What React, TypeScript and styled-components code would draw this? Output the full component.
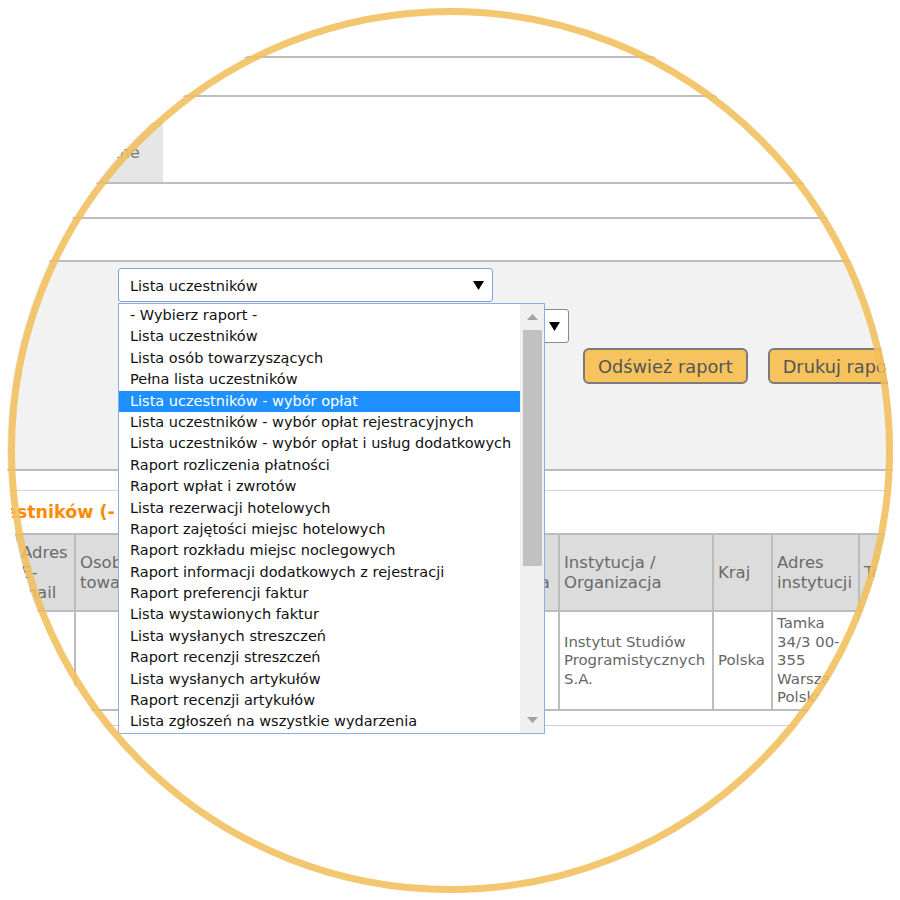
import React from "react";
import styled, { createGlobalStyle } from "styled-components";

const FONT = `"DejaVu Sans", Verdana, sans-serif`;

const Global = createGlobalStyle`
  html, body { margin: 0; padding: 0; background: #fff; }
  body { width: 900px; height: 900px; overflow: hidden; font-family: ${FONT}; }
`;

const Stage = styled.div`
  position: relative;
  width: 900px;
  height: 900px;
  background: #fff;
  overflow: hidden;
`;

const Page = styled.div`
  width: 900px;
  height: 900px;
  background: #fff;
  clip-path: circle(443px at 450px 450px);
  display: flex;
  flex-direction: column;
`;

const Ring = styled.div`
  position: absolute;
  left: 7.5px;
  top: 7.5px;
  width: 885px;
  height: 885px;
  box-sizing: border-box;
  border: 7px solid rgba(241, 190, 92, 0.88);
  border-radius: 50%;
  pointer-events: none;
`;

const Band = styled.div<{ $h: number; $line?: string; $lw?: number }>`
  flex: none;
  box-sizing: border-box;
  height: ${(p) => p.$h}px;
  border-bottom: ${(p) => p.$lw ?? 2}px solid ${(p) => p.$line ?? "#bdbdbd"};
`;

const TabBar = styled(Band)`
  display: flex;
  align-items: flex-end;
`;

const Tab = styled.div`
  width: 163px;
  height: 60px;
  box-sizing: border-box;
  padding-right: 23px;
  background: #e6e6e6;
  color: #777;
  font-size: 16.5px;
  display: flex;
  align-items: center;
  justify-content: flex-end;
  white-space: nowrap;
`;

const Panel = styled.div`
  flex: none;
  box-sizing: border-box;
  height: 209px;
  background: #f2f2f2;
  border-bottom: 2px solid #bbbbbb;
  padding: 6px 0 0 118px;
  display: flex;
  flex-direction: column;
  align-items: flex-start;
`;

const SelectWrap = styled.div`
  position: relative;
  z-index: 2;
`;

const SelectBox = styled.div<{ $w: number; $focus?: boolean }>`
  box-sizing: border-box;
  width: ${(p) => p.$w}px;
  height: 34px;
  background: #fff;
  border: 1px solid ${(p) => (p.$focus ? "#7fa2dc" : "#8a8a8a")};
  border-radius: 3px;
  display: flex;
  align-items: center;
  justify-content: space-between;
  padding: 1px 8px 0 11px;
  font-size: 14.5px;
  color: #111;
`;

const SecondSelect = styled(SelectBox)`
  margin-top: 7px;
  justify-content: flex-end;
`;

const Arrow = styled.svg`
  flex: none;
  display: block;
`;

const DropList = styled.div`
  position: absolute;
  left: 0;
  top: 35px;
  width: 427px;
  box-sizing: border-box;
  border: 1px solid #8eaee0;
  background: #fff;
  display: flex;
  height: 431px;
  padding-top: 1px;
`;

const Items = styled.ul`
  flex: 1;
  margin: 0;
  padding: 0;
  list-style: none;
`;

const Item = styled.li<{ $sel?: boolean }>`
  height: 21.4px;
  line-height: 21.4px;
  padding-left: 11px;
  font-size: 14.5px;
  white-space: nowrap;
  color: ${(p) => (p.$sel ? "#fff" : "#111")};
  background: ${(p) => (p.$sel ? "#1e90ff" : "transparent")};
`;

const ScrollTrack = styled.div`
  width: 24px;
  margin-top: -1px;
  background: #f0f0f0;
  display: flex;
  flex-direction: column;
  align-items: center;
`;

const ScrollBtn = styled.div`
  height: 26px;
  width: 100%;
  display: flex;
  align-items: center;
  justify-content: center;
  flex: none;
`;

const Thumb = styled.div`
  width: 19px;
  height: 236px;
  background: #c1c1c1;
  flex: none;
`;

const Spacer = styled.div`
  flex: 1;
`;

const ButtonRow = styled.div`
  display: flex;
  gap: 20px;
  margin: 5px 0 0 465px;
  white-space: nowrap;
`;

const Button = styled.button`
  height: 36px;
  box-sizing: border-box;
  padding: 0 13px;
  background: #f6c35f;
  border: 2px solid #7a7a7a;
  border-radius: 6px;
  font-family: ${FONT};
  font-size: 17.8px;
  color: #555;
  flex: none;
`;

const TitleBar = styled.div`
  flex: none;
  height: 42px;
  display: flex;
  align-items: center;
  white-space: nowrap;
`;

const Title = styled.h2`
  margin: 0;
  font-size: 17.5px;
  font-weight: bold;
  color: #ff8a00;
  text-indent: -82px;
`;

const Table = styled.table`
  flex: none;
  border-collapse: collapse;
  table-layout: fixed;
  margin-left: 15px;
  width: 1000px;
`;

const Col = styled.col<{ $w: number }>`
  width: ${(p) => p.$w}px;
`;

const Th = styled.th`
  background: #dcdcdc;
  border: 2px solid #bcbcbc;
  color: #6a6a6a;
  font-weight: normal;
  font-size: 16.5px;
  line-height: 20px;
  text-align: left;
  vertical-align: middle;
  padding: 8px 4px 7px;
  overflow: hidden;
`;

const Td = styled.td`
  border: 2px solid #bcbcbc;
  color: #666;
  font-size: 14.9px;
  line-height: 18.5px;
  text-align: left;
  vertical-align: middle;
  padding: 2px 4px;
  overflow: hidden;
`;

const FootLine = styled.div`
  flex: none;
  margin-top: 14px;
  border-top: 1px solid #cfcfcf;
`;

const options = [
  "- Wybierz raport -",
  "Lista uczestników",
  "Lista osób towarzyszących",
  "Pełna lista uczestników",
  "Lista uczestników - wybór opłat",
  "Lista uczestników - wybór opłat rejestracyjnych",
  "Lista uczestników - wybór opłat i usług dodatkowych",
  "Raport rozliczenia płatności",
  "Raport wpłat i zwrotów",
  "Lista rezerwacji hotelowych",
  "Raport zajętości miejsc hotelowych",
  "Raport rozkładu miejsc noclegowych",
  "Raport informacji dodatkowych z rejestracji",
  "Raport preferencji faktur",
  "Lista wystawionych faktur",
  "Lista wysłanych streszczeń",
  "Raport recenzji streszczeń",
  "Lista wysłanych artykułów",
  "Raport recenzji artykułów",
  "Lista zgłoszeń na wszystkie wydarzenia",
];

const DownArrow = () => (
  <Arrow width="11" height="9" viewBox="0 0 11 9">
    <path d="M0 0 H11 L5.5 9 Z" fill="#000" />
  </Arrow>
);

const ScrollArrow = ({ up }: { up?: boolean }) => (
  <Arrow width="11" height="6" viewBox="0 0 11 6">
    <path d={up ? "M0 6 H11 L5.5 0 Z" : "M0 0 H11 L5.5 6 Z"} fill="#a3a3a3" />
  </Arrow>
);

export default function App() {
  return (
    <Stage>
      <Global />
      <Page>
        <Band $h={58} />
        <Band $h={39} />
        <TabBar $h={87}>
          <Tab>Płatności elektroniczne</Tab>
        </TabBar>
        <Band $h={35} />
        <Band $h={43} />
        <Panel>
          <SelectWrap>
            <SelectBox $w={375} $focus>
              <span>Lista uczestników</span>
              <DownArrow />
            </SelectBox>
            <DropList>
              <Items>
                {options.map((o, i) => (
                  <Item key={o} $sel={i === 4}>
                    {o}
                  </Item>
                ))}
              </Items>
              <ScrollTrack>
                <ScrollBtn>
                  <ScrollArrow up />
                </ScrollBtn>
                <Thumb />
                <Spacer />
                <ScrollBtn>
                  <ScrollArrow />
                </ScrollBtn>
              </ScrollTrack>
            </DropList>
          </SelectWrap>
          <SecondSelect $w={451}>
            <DownArrow />
          </SecondSelect>
          <ButtonRow>
            <Button>Odśwież raport</Button>
            <Button>Drukuj raport</Button>
          </ButtonRow>
        </Panel>
        <Band $h={20} $lw={1} $line="#d3d6e0" />
        <TitleBar>
          <Title>Lista uczestników (- wybór opłat -)</Title>
        </TitleBar>
        <Table>
          <colgroup>
            <Col $w={59} />
            <Col $w={126} />
            <Col $w={150} />
            <Col $w={142} />
            <Col $w={66} />
            <Col $w={154} />
            <Col $w={59} />
            <Col $w={87} />
            <Col $w={157} />
          </colgroup>
          <thead>
            <tr>
              <Th>Adres E-mail</Th>
              <Th>Osoba towarzysząca</Th>
              <Th></Th>
              <Th></Th>
              <Th>Typ opłata</Th>
              <Th>Instytucja / Organizacja</Th>
              <Th>Kraj</Th>
              <Th>Adres instytucji</Th>
              <Th>Telefon instytucji</Th>
            </tr>
          </thead>
          <tbody>
            <tr>
              <Td></Td>
              <Td></Td>
              <Td></Td>
              <Td></Td>
              <Td></Td>
              <Td>Instytut Studiów Programistycznych S.A.</Td>
              <Td>Polska</Td>
              <Td>Tamka 34/3 00-355 Warszawa Polska</Td>
              <Td></Td>
            </tr>
          </tbody>
        </Table>
        <FootLine />
      </Page>
      <Ring />
    </Stage>
  );
}
